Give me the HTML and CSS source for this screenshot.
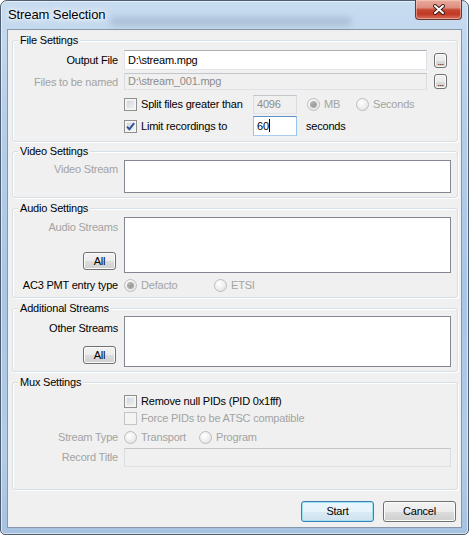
FILE: index.html
```html
<!DOCTYPE html>
<html lang="en">
<head>
<meta charset="utf-8">
<title>Stream Selection</title>
<link rel="stylesheet" href="styles.css">
</head>
<body>
<div class="window">
  <header class="titlebar">
    <span class="title">Stream Selection</span>
    <span class="ghost"></span>
    <span class="close" aria-label="Close"><svg width="14" height="11" viewBox="0 0 14 11"><path d="M3 2 L11 9 M11 2 L3 9" stroke="#3a1a16" stroke-width="3.8" stroke-linecap="round"/><path d="M3 2 L11 9 M11 2 L3 9" stroke="#ffffff" stroke-width="2" stroke-linecap="round"/></svg></span>
  </header>
  <main class="client">
    <section class="group g-file">
      <div class="legend">File Settings</div>
      <div class="row r1">
        <span class="lbl">Output File</span>
        <span class="edit path">D:\stream.mpg</span>
        <span class="browse">...</span>
      </div>
      <div class="row r2">
        <span class="lbl dim">Files to be named</span>
        <span class="edit path dis">D:\stream_001.mpg</span>
        <span class="browse b2">...</span>
      </div>
      <div class="row r3">
        <span class="opt w-chk indent"><span class="chk"></span>Split files greater than</span>
        <span class="edit num dis">4096</span>
        <span class="opt w-mb dim"><span class="radio on"></span>MB</span>
        <span class="opt dim"><span class="radio"></span>Seconds</span>
      </div>
      <div class="row r4">
        <span class="opt w-chk indent"><span class="chk"><svg width="11" height="11" viewBox="0 0 11 11"><path d="M2 5.6 L4.4 8.2 L9.2 2.2" fill="none" stroke="#31509a" stroke-width="1.9"/></svg></span>Limit recordings to</span>
        <span class="edit num focus">60<span class="caret"></span></span>
        <span class="unit">seconds</span>
      </div>
    </section>

    <section class="group g-video">
      <div class="legend">Video Settings</div>
      <div class="row lrow rv">
        <div class="lblcol pv"><span class="dim">Video Stream</span></div>
        <div class="list lv"></div>
      </div>
    </section>

    <section class="group g-audio">
      <div class="legend">Audio Settings</div>
      <div class="row lrow ra">
        <div class="lblcol pa"><span class="dim">Audio Streams</span><span class="btn all">All</span></div>
        <div class="list la"></div>
      </div>
      <div class="row rac3">
        <span class="lbl">AC3 PMT entry type</span>
        <span class="opt w-def dim"><span class="radio on"></span>Defacto</span>
        <span class="opt dim"><span class="radio"></span>ETSI</span>
      </div>
    </section>

    <section class="group g-add">
      <div class="legend">Additional Streams</div>
      <div class="row lrow rad">
        <div class="lblcol po"><span>Other Streams</span><span class="btn all">All</span></div>
        <div class="list lo"></div>
      </div>
    </section>

    <section class="group g-mux">
      <div class="legend">Mux Settings</div>
      <div class="row rm rm1">
        <span class="opt indent"><span class="chk"></span>Remove null PIDs (PID 0x1fff)</span>
      </div>
      <div class="row rm rm2">
        <span class="opt indent dim"><span class="chk dis"></span>Force PIDs to be ATSC compatible</span>
      </div>
      <div class="row rm rm3">
        <span class="lbl dim">Stream Type</span>
        <span class="opt w-tr dim"><span class="radio"></span>Transport</span>
        <span class="opt dim"><span class="radio"></span>Program</span>
      </div>
      <div class="row rm4">
        <span class="lbl dim pt3">Record Title</span>
        <span class="edit dis title-edit"></span>
      </div>
    </section>

    <div class="buttons">
      <span class="btn dlg default">Start</span>
      <span class="btn dlg">Cancel</span>
    </div>
  </main>
</div>
</body>
</html>
```

FILE: styles.css
```css
* { box-sizing: border-box; margin: 0; padding: 0; }
html, body { width: 469px; height: 535px; overflow: hidden; }
body {
  font-family: "Liberation Sans", Arial, sans-serif;
  font-size: 11px;
  line-height: 13px;
  letter-spacing: -0.2px;
  color: #000;
  background: #ffffff;
}

.window {
  width: 469px;
  height: 535px;
  border: 1px solid #4f5d70;
  border-radius: 7px 7px 5px 5px;
  background: linear-gradient(180deg, #c8dcf0 0%, #b6cfea 20%, #a9c6e5 55%, #b2cce8 85%, #a7c2e0 100%);
  box-shadow: inset 0 0 0 1px rgba(255, 255, 255, 0.55);
  padding: 0 6px 6px 6px;
  display: flex;
  flex-direction: column;
}

.titlebar {
  position: relative;
  height: 28px;
  display: flex;
  align-items: flex-start;
  flex: none;
}
.title {
  margin: 6px 0 0 1px;
  font-size: 13px;
  line-height: 15px;
  letter-spacing: -0.1px;
  color: #000;
  text-shadow: 0 0 6px #fff, 0 0 10px rgba(255, 255, 255, 0.9), 0 0 3px rgba(255,255,255,0.9);
}
.ghost {
  position: absolute;
  left: 104px;
  top: 16px;
  width: 240px;
  height: 9px;
  background: rgba(80, 95, 120, 0.2);
  filter: blur(3px);
}
.close {
  margin-left: auto;
  margin-top: -1px;
  width: 47px;
  height: 20px;
  border: 1px solid #6b3630;
  border-top: none;
  border-radius: 0 0 4px 4px;
  background: linear-gradient(180deg, #e9ab9c 0%, #dc8f80 40%, #c74531 52%, #c23a26 75%, #d5725f 100%);
  box-shadow: inset 0 0 0 1px rgba(255, 220, 210, 0.45);
  display: flex;
  align-items: center;
  justify-content: center;
}

.client {
  flex: none;
  width: 455px;
  height: 499px;
  border: 1px solid #8797a9;
  background: #f0f0f0;
  padding: 10px 3px 0 4px;
  display: flex;
  flex-direction: column;
}

.group {
  flex: none;
  border: 1px solid #d5dfe5;
  border-radius: 3px;
  box-shadow: inset 1px 1px 0 #ffffff, 1px 1px 0 #ffffff;
}
.g-file { height: 102px; }
.g-video { height: 47px; margin-top: 9px; }
.g-audio { height: 90px; margin-top: 10px; }
.g-add { height: 64px; margin-top: 10px; }
.g-mux { height: 108px; margin-top: 10px; }

.legend {
  width: fit-content;
  height: 13px;
  margin: -7px 0 0 5px;
  padding: 0 2px;
  background: #f0f0f0;
  white-space: nowrap;
}

.row { display: flex; align-items: flex-start; white-space: nowrap; }
.lbl {
  flex: none;
  width: 105px;
  margin-right: 6px;
  text-align: right;
}
.dim { color: #a3a3a3; }
.pt3 { padding-top: 3px; }
.indent { margin-left: 111px; }

/* File settings */
.r1 { margin-top: 3px; height: 20px; }
.r1 .lbl { padding-top: 4px; }
.r2 { margin-top: 3px; height: 17px; }
.r2 .lbl { padding-top: 3px; }
.r3 { margin-top: 5px; height: 19px; align-items: center; }
.r4 { margin-top: 2px; height: 20px; align-items: center; }

.edit {
  flex: none;
  display: block;
  border: 1px solid;
  border-color: #abadb3 #dbdfe6 #e3e9ef #e2e3ea;
  background: #ffffff;
  padding: 0 3px;
  white-space: nowrap;
  overflow: hidden;
}
.edit.path { width: 303px; }
.r1 .edit { height: 20px; line-height: 18px; }
.r2 .edit { height: 17px; line-height: 15px; }
.edit.dis {
  background: #f0f0f0;
  border-color: #c2c5c9 #d9dce0 #dfe2e6 #d9dce0;
  color: #8c8c8c;
}
.edit.num { width: 44px; height: 19px; line-height: 17px; }
.r4 .edit.num { height: 20px; line-height: 18px; }
.edit.focus { border-color: #5c93c9 #9ac3ea #a9cdef #9ac3ea; }
.caret {
  display: inline-block;
  width: 1px;
  height: 13px;
  background: #000;
  vertical-align: -2px;
}
.unit { margin-left: 9px; }

.browse {
  flex: none;
  width: 13px;
  height: 15px;
  margin-left: 7px;
  margin-top: 3px;
  border: 1px solid #707070;
  border-radius: 3px;
  background: linear-gradient(180deg, #f2f2f2 0%, #ebebeb 50%, #dddddd 51%, #cfcfcf 100%);
  box-shadow: inset 0 0 0 1px #fbfbfb;
  font-size: 9px;
  line-height: 17px;
  letter-spacing: -0.5px;
  text-align: center;
  overflow: hidden;
  color: #000;
}
.browse.b2 { margin-top: 1px; }

.opt { display: flex; align-items: center; flex: none; }
.w-chk { width: 129px; }
.w-mb { width: 49px; margin-left: 10px; }
.w-def { width: 90px; }
.w-tr { width: 75px; }

.chk {
  flex: none;
  width: 13px;
  height: 13px;
  margin-right: 4px;
  border: 1px solid #8e8f8f;
  background: linear-gradient(135deg, #c9cdd3 0%, #e3e5e8 55%, #f7f7f7 100%);
  box-shadow: inset 0 0 0 1px #f6f6f6, inset 0 0 0 2px #f0f0f0;
  display: flex;
}
.chk.dis {
  border-color: #c4c4c4;
  background: #f4f4f4;
  box-shadow: none;
}

.radio {
  flex: none;
  position: relative;
  width: 13px;
  height: 13px;
  margin-right: 4px;
  border-radius: 50%;
  border: 1px solid #bdbdbd;
  background: radial-gradient(circle at 40% 35%, #ffffff 0%, #ececec 60%, #dcdcdc 100%);
}
.radio.on::after {
  content: "";
  position: absolute;
  left: 3px;
  top: 3px;
  width: 5px;
  height: 5px;
  border-radius: 50%;
  background: radial-gradient(circle at 40% 35%, #b0b0b0 0%, #868686 100%);
  box-shadow: 0 0 0 1px #a8a8a8;
}

/* list rows */
.lrow { align-items: stretch; }
.lblcol {
  flex: none;
  width: 105px;
  margin-right: 6px;
  display: flex;
  flex-direction: column;
  align-items: flex-end;
  justify-content: space-between;
  padding-bottom: 3px;
}
.list {
  flex: none;
  width: 327px;
  border: 1px solid #828790;
  background: #ffffff;
}
.rv { margin-top: 2px; }
.lv { height: 33px; }
.pv { padding-top: 3px; }
.ra { margin-top: 2px; }
.la { height: 56px; }
.pa { padding-top: 4px; }
.rad { margin-top: 1px; }
.lo { height: 51px; }
.po { padding-top: 6px; }

.rac3 { margin-top: 5px; height: 15px; align-items: center; }

.rm { height: 15px; align-items: center; }
.rm1 { margin-top: 5px; }
.rm2 { margin-top: 2px; }
.rm3 { margin-top: 4px; }
.rm4 { margin-top: 3px; height: 19px; }
.title-edit { width: 327px; height: 19px; }

/* buttons */
.btn {
  display: flex;
  align-items: center;
  justify-content: center;
  border: 1px solid #707070;
  border-radius: 3px;
  background: linear-gradient(180deg, #f2f2f2 0%, #ebebeb 50%, #dddddd 51%, #cfcfcf 100%);
  box-shadow: inset 0 0 0 1px #fbfbfb;
  color: #000;
}
.all {
  width: 33px;
  height: 18px;
  margin-right: 2px;
}
.buttons {
  flex: none;
  margin-top: 11px;
  display: flex;
  justify-content: flex-end;
  gap: 9px;
  padding-right: 2px;
}
.dlg { width: 73px; height: 21px; }
.dlg.default {
  border-color: #3c7fb1;
  box-shadow: inset 0 0 0 1px #9fe0f7;
  background: linear-gradient(180deg, #eaf6fd 0%, #e7f2f9 50%, #d9ebf4 51%, #cfe2ee 100%);
}
```
